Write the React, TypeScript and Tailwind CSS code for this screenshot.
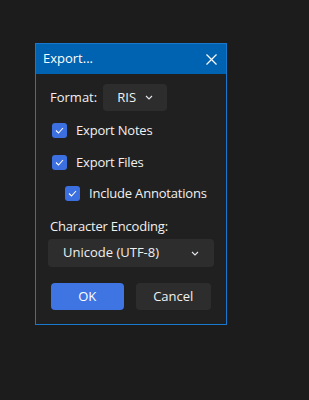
import React from 'react';

const Chevron = () => (
  <svg width="8" height="5" viewBox="0 0 8 5" fill="none" className="text-gray-200">
    <path d="M1 1 L4 4 L7 1" stroke="currentColor" strokeWidth="1.1" />
  </svg>
);

const Check = ({ label, indent }: { label: string; indent?: boolean }) => (
  <div className={`flex items-center gap-[9px] ${indent ? 'pl-[13px]' : ''}`}>
    <div className="flex h-[15px] w-[15px] items-center justify-center rounded-[3px] bg-[#3c6fe0]">
      <svg width="9" height="7" viewBox="0 0 9 7" fill="none">
        <path d="M1 3.5 L3.5 6 L8 1" stroke="white" strokeWidth="1.1" />
      </svg>
    </div>
    <span className="text-[13px] tracking-[-0.2px] text-[#f0f0f0]">{label}</span>
  </div>
);

export default function App() {
  return (
    <div
      className="min-h-[400px] w-full bg-[#1c1c1c] pl-[35px] pt-[43px]"
      style={{ fontFamily: '"Open Sans", "Noto Sans", sans-serif' }}
    >
      <div className="w-[192px] border border-[#1a78cc] bg-[#202020]">
        <div className="flex h-[30px] items-center justify-between bg-[#0063b1] pl-[7px] pr-[9px]">
          <span className="text-[13px] text-white">Export...</span>
          <svg width="11" height="11" viewBox="0 0 11 11" fill="none">
            <path d="M0.5 0.5 L10.5 10.5 M10.5 0.5 L0.5 10.5" stroke="white" strokeWidth="1.2" />
          </svg>
        </div>
        <div className="flex flex-col px-[12px] pb-[14px] pt-[10px]">
          <div className="flex items-center gap-[6px] pl-[2px]">
            <span className="text-[13px] text-[#f0f0f0]">Format:</span>
            <div className="flex h-[27px] w-[64px] items-center justify-center gap-[9px] rounded-[4px] bg-[#2d2d2d]">
              <span className="text-[13px] text-[#f0f0f0]">RIS</span>
              <Chevron />
            </div>
          </div>
          <div className="mt-[10px] flex flex-col gap-[12px] pl-[4px]">
            <Check label="Export Notes" />
            <Check label="Export Files" />
            <Check label="Include Annotations" indent />
          </div>
          <span className="mt-[13px] pl-[2px] text-[13px] tracking-[-0.2px] text-[#f0f0f0]">Character Encoding:</span>
          <div className="mt-[3px] flex h-[28px] items-center justify-between rounded-[4px] bg-[#2d2d2d] pl-[15px] pr-[15px]">
            <span className="text-[13px] text-[#f0f0f0]">Unicode (UTF-8)</span>
            <Chevron />
          </div>
          <div className="mt-[16px] flex gap-[12px] px-[3px]">
            <button className="h-[27px] w-[73px] rounded-[4px] bg-[#3f74e3] text-[13px] text-white">OK</button>
            <button className="h-[27px] w-[76px] rounded-[4px] bg-[#2d2d2d] text-[13px] text-[#f0f0f0]">Cancel</button>
          </div>
        </div>
      </div>
    </div>
  );
}
